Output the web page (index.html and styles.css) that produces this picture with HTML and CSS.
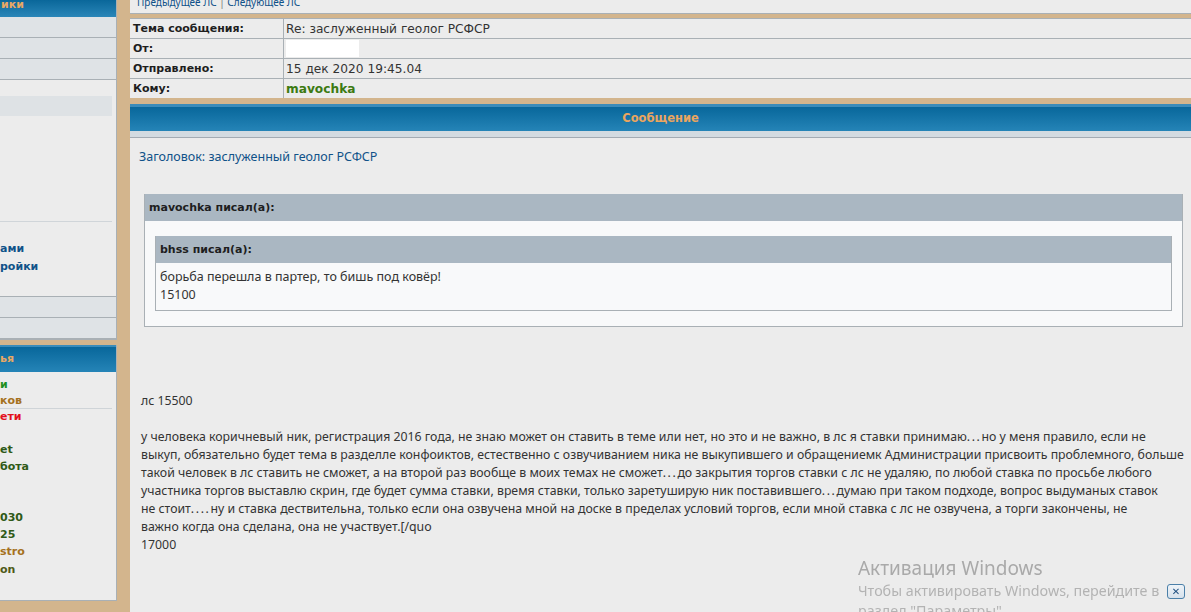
FILE: index.html
```html
<!DOCTYPE html>
<html lang="ru">
<head>
<meta charset="utf-8">
<title>Личное сообщение</title>
<link rel="stylesheet" href="styles.css">
</head>
<body>
<div class="page">
  <aside class="sidebar">
    <section class="panel panel-menu">
      <div class="panel-head">ики</div>
      <div class="srow"></div>
      <div class="srow"></div>
      <div class="srow"></div>
      <div class="menu-body">
        <div class="menu-hl"></div>
        <div class="menu-sep"></div>
        <a class="menu-link" href="#">ами</a>
        <a class="menu-link" href="#">ройки</a>
      </div>
      <div class="srow"></div>
      <div class="srow"></div>
    </section>
    <section class="panel panel-users">
      <div class="panel-head tall">ья</div>
      <div class="users">
        <div class="u u-green l17">и</div>
        <div class="u u-brown l15">ков</div>
        <div class="users-sep"></div>
        <div class="u u-red l15">ети</div>
        <div class="u l17"></div>
        <div class="u u-olive l17">et</div>
        <div class="u u-olive l17">бота</div>
        <div class="u l17"></div>
        <div class="u l17"></div>
        <div class="u u-olive l17">030</div>
        <div class="u u-olive l17">25</div>
        <div class="u u-brown l18">stro</div>
        <div class="u u-dark l17">on</div>
      </div>
    </section>
  </aside>

  <main class="main">
    <div class="pager"><span class="pager-in"><a href="#">Предыдущее ЛС</a> <span class="bar">|</span> <a href="#">Следующее ЛС</a></span></div>

    <table class="info">
      <tr><td class="lbl">Тема сообщения:</td><td class="val">Re: заслуженный геолог РСФСР</td></tr>
      <tr><td class="lbl">От:</td><td class="val"><span class="hidden-name"></span></td></tr>
      <tr><td class="lbl">Отправлено:</td><td class="val">15 дек 2020 19:45.04</td></tr>
      <tr><td class="lbl">Кому:</td><td class="val"><b class="to-user">mavochka</b></td></tr>
    </table>

    <section class="msg">
      <div class="msg-head">Сообщение</div>
      <div class="msg-strip"></div>
      <div class="msg-body">
        <div class="msg-title">Заголовок: заслуженный геолог РСФСР</div>
        <div class="quote">
          <div class="quote-head">mavochka писал(а):</div>
          <div class="quote-body">
            <div class="quote inner">
              <div class="quote-head">bhss писал(а):</div>
              <div class="quote-body inner-body">борьба перешла в партер, то бишь под ковёр!<br>15100</div>
            </div>
          </div>
        </div>
        <div class="post">
          <p class="p-first">лс 15500</p>
          <p>у человека коричневый ник, регистрация 2016 года, не знаю может он ставить в теме или нет, но это и не важно, в лс я ставки принимаю<span class="ell">...</span>но у меня правило, если не<br>выкуп, обязательно будет тема в разделле конфоиктов, естественно с озвучиванием ника не выкупившего и обращениемк Администрации присвоить проблемного, больше<br>такой человек в лс ставить не сможет, а на второй раз вообще в моих темах не сможет<span class="ell">...</span>до закрытия торгов ставки с лс не удаляю, по любой ставка по просьбе любого<br>участника торгов выставлю скрин, где будет сумма ставки, время ставки, только заретуширую ник поставившего<span class="ell">...</span>думаю при таком подходе, вопрос выдуманых ставок<br>не стоит<span class="ell">....</span>ну и ставка дествительна, только если она озвучена мной на доске в пределах условий торгов, если мной ставка с лс не озвучена, а торги закончены, не<br>важно когда она сделана, она не участвует.[/quo<br>17000</p>
        </div>
      </div>
    </section>
  </main>
</div>

<div class="activation">
  <div class="act-title">Активация Windows</div>
  <div class="act-text">Чтобы активировать Windows, перейдите в</div>
  <div class="act-text">раздел "Параметры".</div>
</div>
<div class="act-close">✕</div>
</body>
</html>
```

FILE: styles.css
```css
html, body {
  margin: 0;
  padding: 0;
}
body {
  background: #d3b58d;
  font-family: "DejaVu Sans", Verdana, sans-serif;
  font-size: 11px;
  color: #333;
  height: 612px;
  overflow: hidden;
}
a { text-decoration: none; }

.page {
  display: flex;
  align-items: flex-start;
  gap: 13px;
}

/* ---------- sidebar ---------- */
.sidebar {
  width: 117px;
  flex: none;
  display: flex;
  flex-direction: column;
  gap: 5px;
}
.panel {
  width: 116px;
  background: #ececec;
  border-right: 1px solid #a9b0b5;
  border-bottom: 1px solid #a9b0b5;
}
.panel-head {
  height: 17px;
  line-height: 9px;
  background: linear-gradient(#0a679a, #2a86b8);
  color: #e9a864;
  font-weight: bold;
  padding-left: 1px;
  overflow: hidden;
}
.panel-head.tall {
  height: 27px;
  line-height: 27px;
  background: linear-gradient(#3b8cba 0, #3b8cba 2px, #08679b 2px, #2584b7 100%);
  padding-left: 0;
}
.srow {
  height: 20px;
  background: #dfe3e6;
  border-bottom: 1px solid #a9b0b5;
}
.menu-body + .srow { border-top: 1px solid #a9b0b5; }
.menu-body {
  height: 200px;
  padding-top: 16px;
  display: flex;
  flex-direction: column;
}
.menu-hl {
  width: 112px;
  height: 20px;
  background: #dee2e5;
}
.menu-sep {
  width: 112px;
  height: 1px;
  background: #d0d5d9;
  margin-top: 105px;
  margin-bottom: 18px;
}
.menu-link {
  color: #105289;
  font-weight: bold;
  line-height: 18px;
}

.users {
  height: 224px;
  padding-top: 4px;
  font-weight: bold;
}
.u { white-space: nowrap; }
.l15 { height: 15px; line-height: 15px; }
.l17 { height: 17px; line-height: 17px; }
.l18 { height: 18px; line-height: 18px; }
.u-green { color: #1e8f1e; }
.u-brown { color: #a5711d; }
.u-red { color: #e3101c; }
.u-olive { color: #2f5a17; }
.u-dark { color: #4f5a17; }
.users-sep {
  width: 112px;
  height: 1px;
  background: #cfd4d8;
}

/* ---------- main ---------- */
.main {
  flex: 1;
  min-width: 0;
}
.pager {
  height: 13px;
  overflow: hidden;
  background: #ececec;
  border-bottom: 1px solid #a9b0b5;
  padding-left: 7px;
  font-family: "Noto Sans", sans-serif;
  font-size: 10px;
}
.pager-in {
  display: block;
  line-height: 13px;
  margin-top: -4px;
}
.pager a { color: #105289; }
.pager .bar { color: #777; }

.info {
  width: 100%;
  margin-top: 4px;
  border-collapse: collapse;
  border-top: 1px solid #a9b0b5;
  background: #ececec;
}
.info td {
  height: 19px;
  padding: 0 0 0 3px;
  border-bottom: 1px solid #a9b0b5;
  vertical-align: middle;
}
.info tr:last-child td { border-bottom: 0; }
.info .lbl {
  width: 150px;
  border-right: 1px solid #a9b0b5;
  font-weight: bold;
  color: #1e1e1e;
}
.info .val {
  padding-left: 2px;
  font-size: 12.2px;
  color: #333;
}
.hidden-name {
  display: block;
  width: 73px;
  height: 17px;
  background: #fff;
}
.to-user {
  color: #3c7a12;
}

.msg { margin-top: 6px; }
.msg-head {
  height: 27px;
  line-height: 28px;
  text-align: center;
  background: linear-gradient(#3b8cba 0, #3b8cba 3px, #08679b 3px, #2584b7 100%);
  color: #eba55e;
  font-weight: bold;
  font-size: 11.5px;
}
.msg-strip {
  height: 6px;
  background: #d3dbe1;
  border-bottom: 1px solid #a3abb3;
}
.msg-body {
  background: #ececec;
  padding: 10px 8px 0 9px;
  height: 464px;
  overflow: hidden;
  font-family: "Noto Sans", sans-serif;
  font-size: 12.5px;
}
.msg-title {
  color: #105289;
  font-size: 12.5px;
  line-height: 18px;
}

.quote {
  margin: 28px 0 0 5px;
  background: #f8f9fa;
  border: 1px solid #a9b0b5;
  border-top: 0;
}
.quote-head {
  height: 27px;
  line-height: 27px;
  background: #aab7c2;
  padding-left: 4px;
  font-family: "DejaVu Sans", Verdana, sans-serif;
  font-size: 11px;
  font-weight: bold;
  color: #1e1e1e;
}
.quote-body {
  padding: 15px 10px 15px 10px;
}
.quote.inner {
  margin: 0;
}
.inner-body {
  padding: 5px 4px 6px 4px;
  line-height: 18px;
  color: #333;
}

.post {
  padding-left: 2px;
  color: #333;
  line-height: 18px;
  font-size: 12.3px;
  white-space: nowrap;
}
.post p { margin: 0; }
.post .p-first {
  margin-top: 65px;
  margin-bottom: 18px;
}
.ell {
  letter-spacing: 1.6px;
}

/* ---------- windows watermark overlay ---------- */
.activation {
  position: fixed;
  left: 858px;
  top: 555px;
  color: #a9a9a9;
  font-family: "Noto Sans", "Open Sans", sans-serif;
  white-space: nowrap;
}
.act-title {
  font-size: 19px;
  line-height: 26px;
}
.act-text {
  font-size: 14.3px;
  line-height: 20px;
  color: #b3b3b3;
}
.act-close {
  position: fixed;
  left: 1167px;
  top: 584px;
  width: 16px;
  height: 13px;
  border: 1px solid #4a7fa8;
  border-radius: 3px;
  background: linear-gradient(#eef3f8, #d6e1eb);
  color: #1c4d7e;
  font-family: "DejaVu Sans", sans-serif;
  font-size: 10px;
  font-weight: bold;
  line-height: 13px;
  text-align: center;
}
```
